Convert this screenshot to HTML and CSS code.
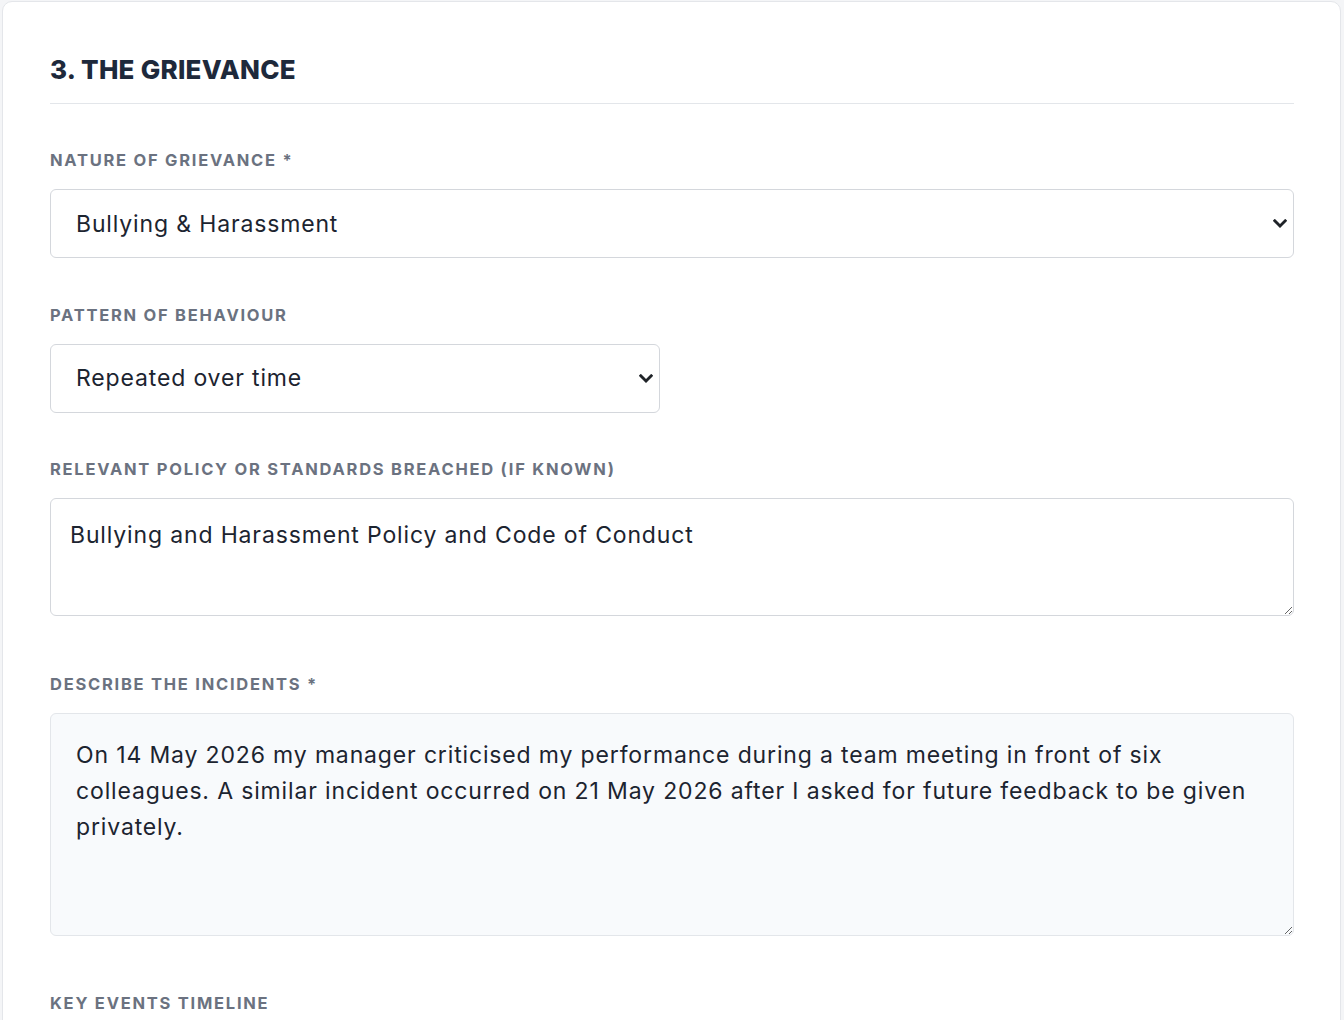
FILE: index.html
```html
<!DOCTYPE html>
<html lang="en">
<head>
<meta charset="utf-8">
<title>The Grievance</title>
<link rel="stylesheet" href="styles.css">
</head>
<body>
<section class="card">
  <h2 class="section-title">3. THE GRIEVANCE</h2>

  <div class="field">
    <label class="field-label" for="nature">Nature of Grievance *</label>
    <select id="nature" class="control select select-full">
      <option>Bullying &amp; Harassment</option>
    </select>
  </div>

  <div class="field">
    <label class="field-label" for="pattern">Pattern of Behaviour</label>
    <select id="pattern" class="control select select-half">
      <option>Repeated over time</option>
    </select>
  </div>

  <div class="field field-text">
    <label class="field-label" for="policy">Relevant Policy or Standards Breached (if known)</label>
    <textarea id="policy" class="control textarea-policy">Bullying and Harassment Policy and Code of Conduct</textarea>
  </div>

  <div class="field field-text">
    <label class="field-label" for="incidents">Describe the Incidents *</label>
    <textarea id="incidents" class="control textarea-incidents">On 14 May 2026 my manager criticised my performance during a team meeting in front of six colleagues. A similar incident occurred on 21 May 2026 after I asked for future feedback to be given privately.</textarea>
  </div>

  <div class="field">
    <label class="field-label">Key Events Timeline</label>
  </div>
</section>
</body>
</html>
```

FILE: styles.css
```css
html, body {
  margin: 0;
  padding: 0;
}

body {
  background: #f4f5f7;
  font-family: Inter, "Noto Sans", sans-serif;
  color: #1f2937;
  height: 1020px;
  overflow: hidden;
}

.card {
  margin: 1px 3px 0 2px;
  background: #ffffff;
  border: 1px solid #e4e6ea;
  border-radius: 10px;
  padding: 50px 46px 48px 47px;
  min-height: 1100px;
  box-sizing: border-box;
}

.section-title {
  margin: 0 0 46px 0;
  padding: 0 0 15px 0;
  font-size: 26px;
  line-height: 36px;
  font-weight: 800;
  letter-spacing: 0.25px;
  color: #1e293b;
  border-bottom: 1px solid #e3e6ea;
}

.field {
  margin-bottom: 46.5px;
}

.field-text {
  margin-bottom: 57.5px;
}

.field-label {
  display: block;
  margin-bottom: 19px;
  font-size: 16.5px;
  line-height: 20px;
  font-weight: 700;
  letter-spacing: 1.75px;
  text-transform: uppercase;
  color: #6b7280;
}

.control {
  display: block;
  box-sizing: border-box;
  font-family: Inter, "Noto Sans", sans-serif;
  font-size: 23px;
  letter-spacing: 0.85px;
  color: #1c2430;
  border: 1px solid #d4d7dc;
  border-radius: 6px;
  background-color: #ffffff;
  margin: 0;
}

.select {
  height: 69px;
  padding: 0 30px 0 25px;
  appearance: none;
  -webkit-appearance: none;
  background-image: url("data:image/svg+xml,%3Csvg xmlns='http://www.w3.org/2000/svg' width='14' height='9' viewBox='0 0 14 9'%3E%3Cpath d='M1.8 1.8 L7 7 L12.2 1.8' fill='none' stroke='%231f2328' stroke-width='2.8' stroke-linecap='square'/%3E%3C/svg%3E");
  background-repeat: no-repeat;
  background-size: 14px 9px;
  background-position: right 6px center;
}

.select-full {
  width: 100%;
}

.select-half {
  width: 610px;
}

.textarea-policy {
  width: 100%;
  height: 118px;
  padding: 18px 19px 16px 19px;
  line-height: 36px;
  resize: vertical;
}

.textarea-incidents {
  width: 100%;
  height: 223px;
  padding: 23px 25px;
  line-height: 36px;
  background-color: #f8fafc;
  border-color: #e3e6ea;
  resize: vertical;
}
```
